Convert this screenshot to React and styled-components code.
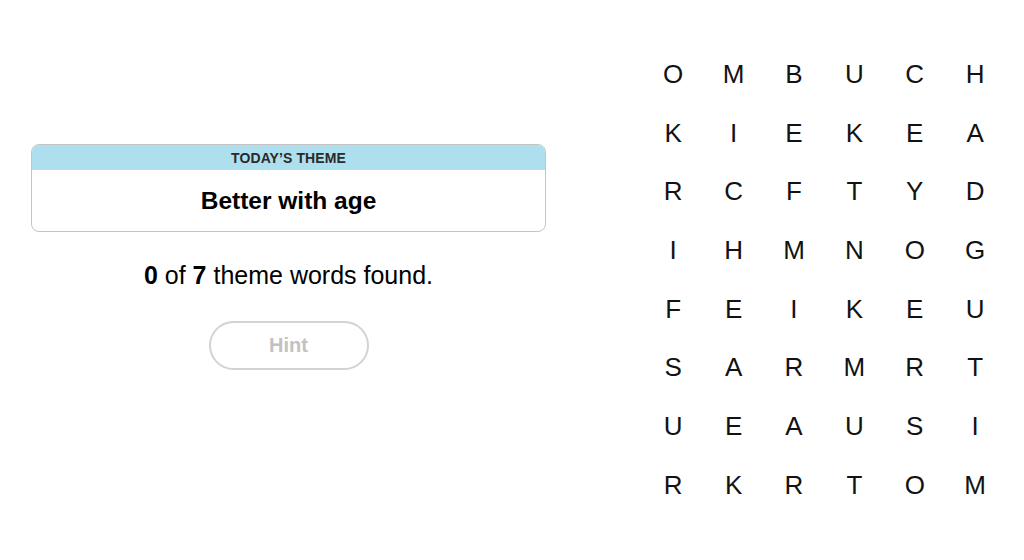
import React from "react";
import styled, { createGlobalStyle } from "styled-components";

const GlobalStyle = createGlobalStyle`
  html, body {
    margin: 0;
    padding: 0;
    background: #ffffff;
  }
  body {
    font-family: "Liberation Sans", Arial, sans-serif;
    color: #000;
  }
`;

const letters = [
  "OMBUCH",
  "KIEKEA",
  "RCFTYD",
  "IHMNOG",
  "FEIKEU",
  "SARMRT",
  "UEAUSI",
  "RKRTOM",
];

function App() {
  return (
    <>
      <GlobalStyle />
      <Page>
        <Side>
          <ThemeCard>
            <ThemeHeader>TODAY&#8217;S THEME</ThemeHeader>
            <ThemeTitle>Better with age</ThemeTitle>
          </ThemeCard>
          <Progress>
            <b>0</b> of <b>7</b> theme words found.
          </Progress>
          <HintButton disabled>Hint</HintButton>
        </Side>
        <Board>
          {letters.map((row, r) =>
            row.split("").map((ch, c) => <Cell key={`${r}-${c}`}>{ch}</Cell>)
          )}
        </Board>
      </Page>
    </>
  );
}

export default App;

const Page = styled.div`
  width: 1024px;
  height: 560px;
  display: flex;
  align-items: flex-start;
  box-sizing: border-box;
  padding: 45px 0 0 31px;
`;

const Side = styled.div`
  width: 515px;
  margin-top: 99px;
  display: flex;
  flex-direction: column;
  align-items: center;
`;

const ThemeCard = styled.div`
  width: 100%;
  box-sizing: border-box;
  border: 1px solid #c4c4c4;
  border-radius: 8px;
  overflow: hidden;
  display: flex;
  flex-direction: column;
`;

const ThemeHeader = styled.div`
  height: 25px;
  background: #aedfee;
  display: flex;
  align-items: center;
  justify-content: center;
  font-size: 14px;
  font-weight: 700;
  color: #2a2a2a;
  letter-spacing: 0.1px;
`;

const ThemeTitle = styled.div`
  height: 61px;
  display: flex;
  align-items: center;
  justify-content: center;
  font-size: 24.5px;
  font-weight: 700;
  color: #000;
`;

const Progress = styled.p`
  margin: 28px 0 0;
  font-size: 25px;
  line-height: 30px;
  color: #000;
  b {
    font-weight: 700;
  }
`;

const HintButton = styled.button`
  margin-top: 31px;
  width: 160px;
  height: 49px;
  border-radius: 25px;
  border: 2px solid #d3d3d3;
  background: #fff;
  color: #c2c2c2;
  font-family: inherit;
  font-size: 20px;
  font-weight: 700;
  cursor: default;
`;

const Board = styled.div`
  margin-left: 97px;
  display: grid;
  grid-template-columns: repeat(6, 60.4px);
  grid-auto-rows: 58.7px;
`;

const Cell = styled.div`
  display: flex;
  align-items: center;
  justify-content: center;
  font-size: 26px;
  color: #121212;
`;
